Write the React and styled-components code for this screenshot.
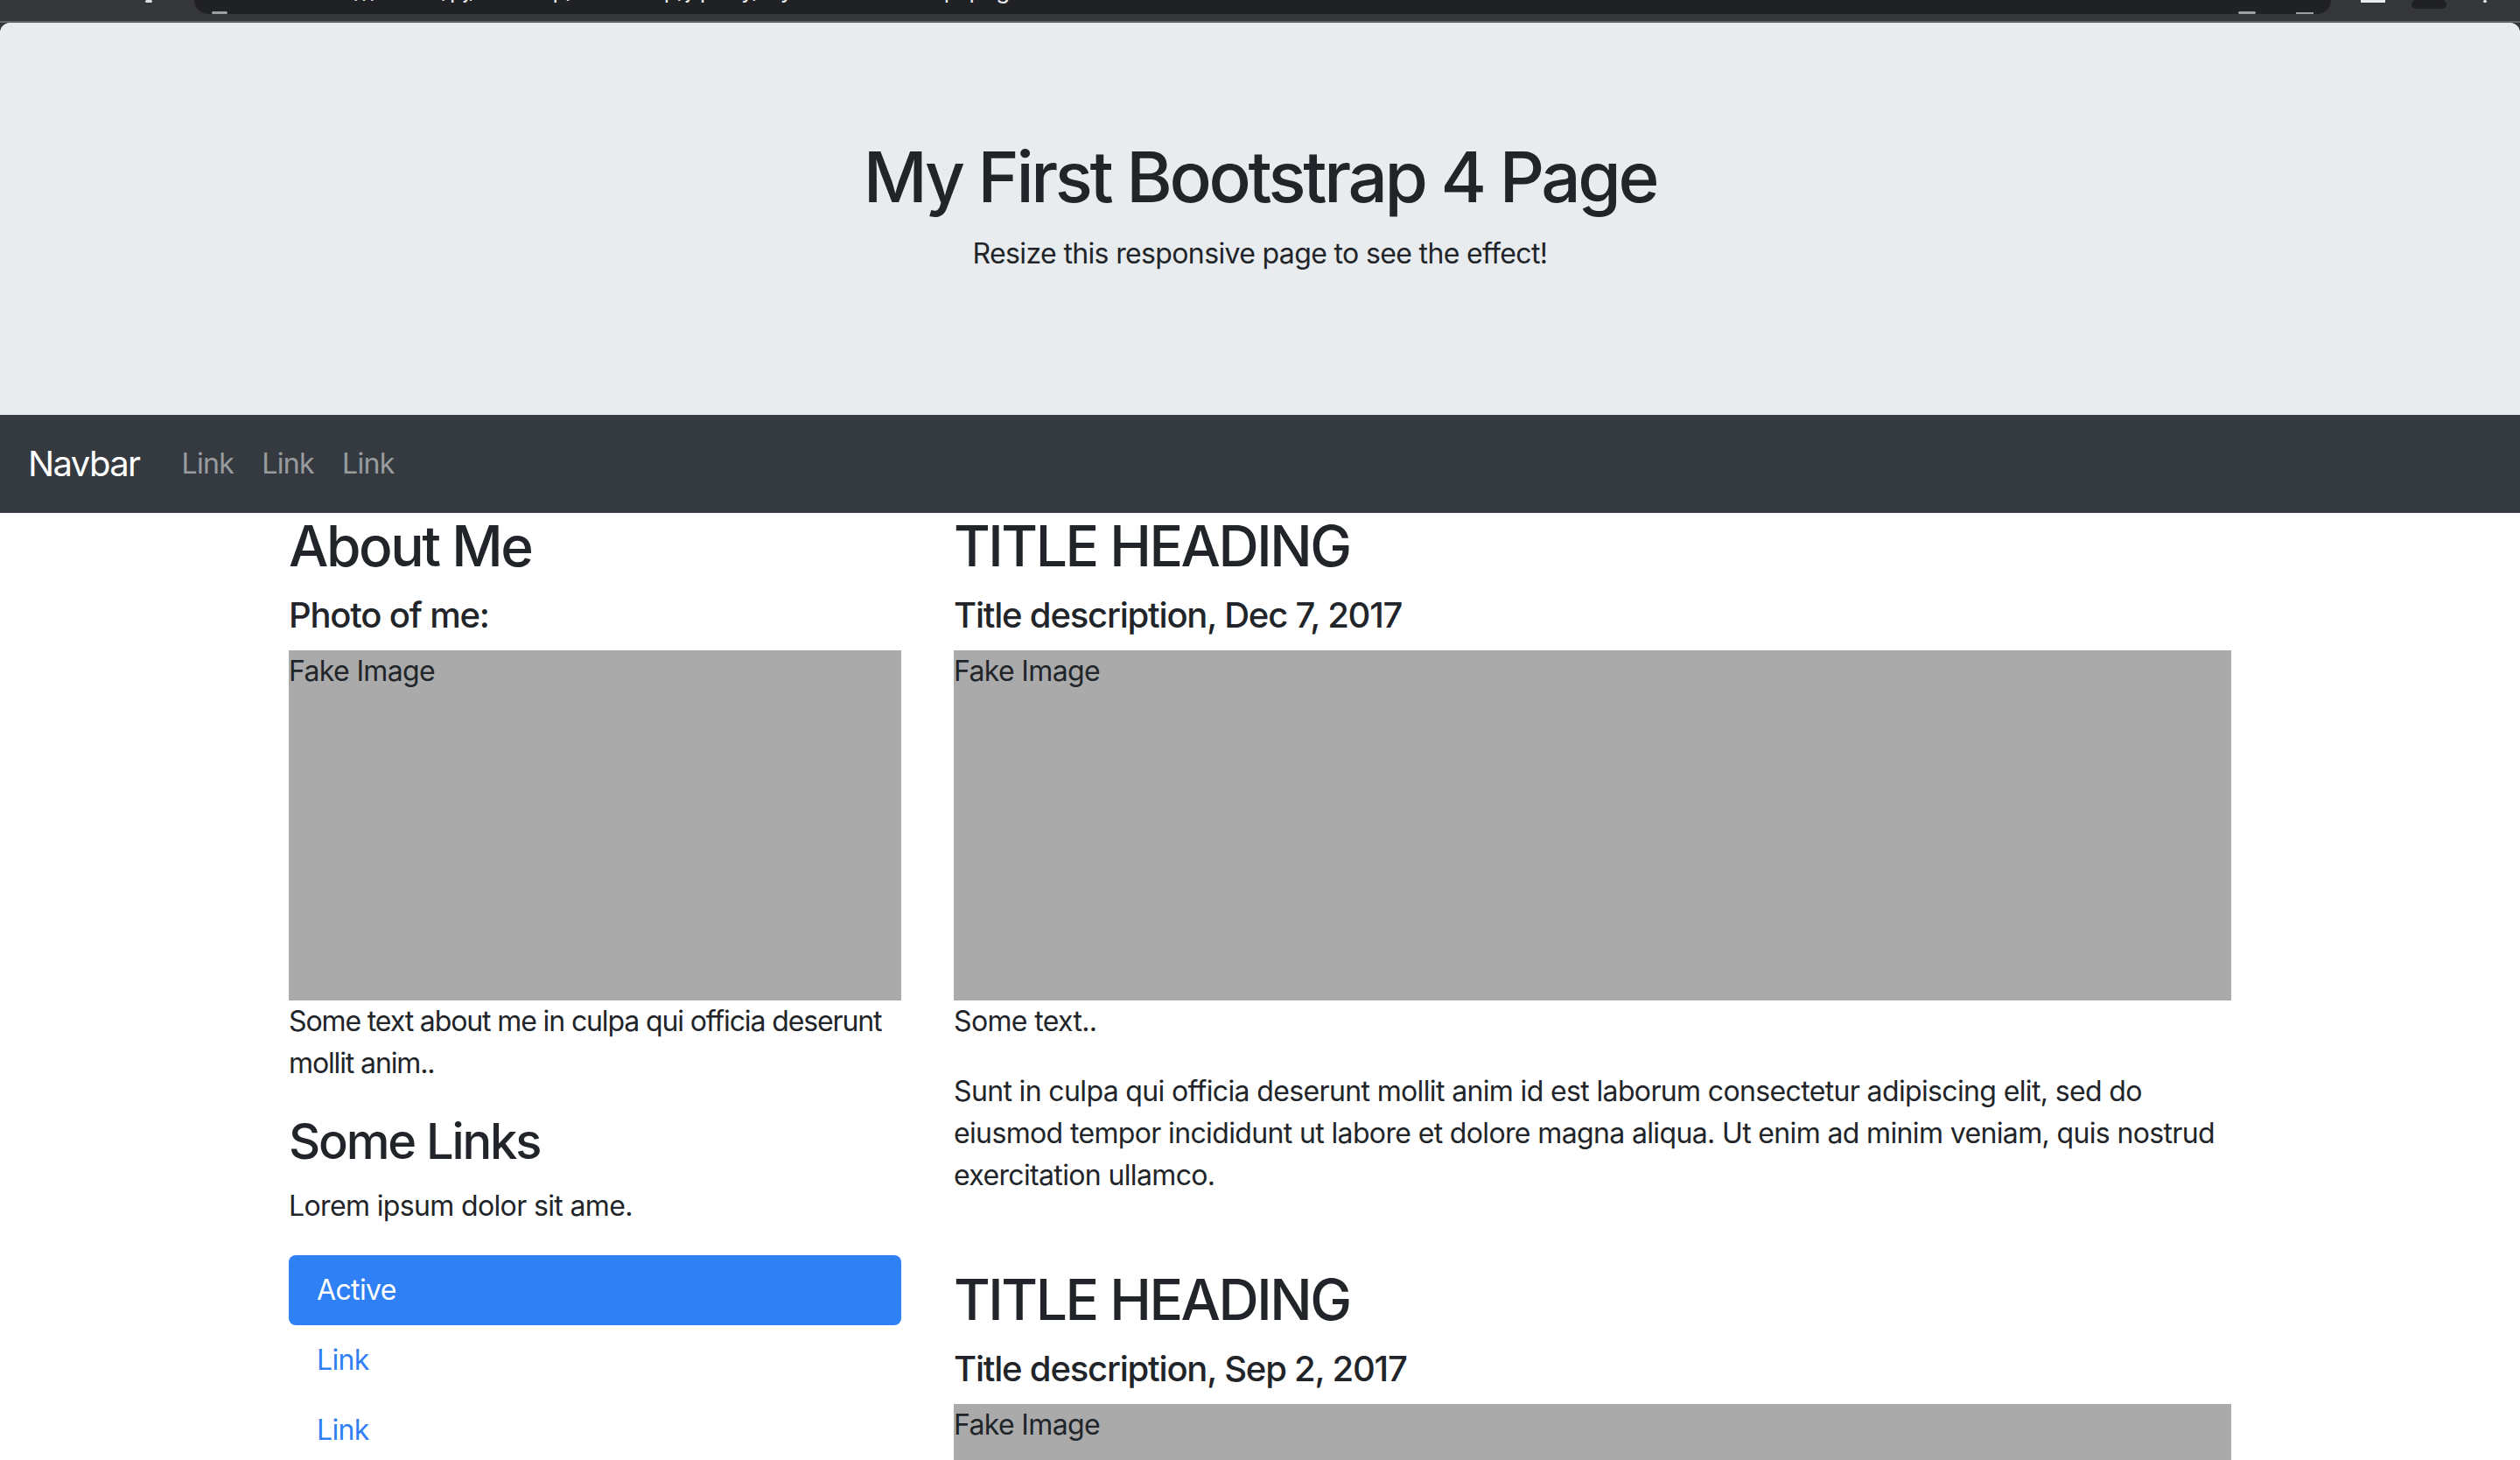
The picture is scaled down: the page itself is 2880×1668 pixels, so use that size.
import React from 'react';
import styled, { createGlobalStyle } from 'styled-components';

const GlobalStyle = createGlobalStyle`
  html, body {
    margin: 0;
    padding: 0;
    background: #35363a;
  }
  body {
    font-family: Inter, "Noto Sans", sans-serif;
    font-size: 32px;
    line-height: 1.5;
    letter-spacing: -0.02em;
    color: #212529;
  }
  * {
    box-sizing: border-box;
  }
`;

// browser chrome strip, cut off at the top of the screenshot
const Chrome = styled.div`
  height: 26px;
  display: flex;
  align-items: flex-start;
  background: #35363a;
  border-bottom: 2px solid #626366;
  overflow: hidden;
`;

const ChromeMark = styled.span`
  display: block;
  width: ${(p) => p.w}px;
  height: ${(p) => p.h}px;
  margin-left: ${(p) => p.ml}px;
  background: ${(p) => p.color || '#dadce0'};
  border-radius: ${(p) => p.r || 0}px;
  flex: none;
`;

const UrlBar = styled.div`
  width: 2442px;
  margin-left: 48px;
  height: 16px;
  background: #202124;
  border-radius: 0 0 16px 16px;
  display: flex;
  align-items: flex-end;
  overflow: hidden;
  flex: none;
`;

const UrlText = styled.span`
  margin-left: 100px;
  margin-bottom: 14px;
  font-size: 26px;
  line-height: 1;
  letter-spacing: 0;
  color: #e8eaed;
  white-space: nowrap;
`;

const UrlSpacer = styled.span`
  flex: 1;
`;

const Page = styled.div`
  background: #fff;
  border-radius: 12px 12px 0 0;
  overflow: hidden;
`;

const Jumbotron = styled.div`
  background: #e9ecef;
  padding: 128px 64px;
  text-align: center;
`;

const Title = styled.h1`
  margin: 0 0 16px;
  font-size: 80px;
  font-weight: 500;
  line-height: 1.2;
  letter-spacing: -0.042em;
`;

const Lead = styled.p`
  margin: 0 0 32px;
`;

const Navbar = styled.nav`
  background: #343a40;
  display: flex;
  align-items: center;
  padding: 16px 32px;
`;

const Brand = styled.a`
  font-size: 40px;
  line-height: 1.5;
  padding: 10px 0;
  margin-right: 32px;
  letter-spacing: -0.04em;
  color: #fff;
  text-decoration: none;
`;

const NavLink = styled.a`
  padding: 16px;
  color: rgba(255, 255, 255, 0.5);
  text-decoration: none;
`;

const Container = styled.div`
  width: 2280px;
  margin: 0 auto;
  padding: 0 30px;
`;

const Row = styled.div`
  display: flex;
  margin: 0 -30px;
`;

const Col = styled.div`
  flex: 0 0 ${(p) => p.span}%;
  max-width: ${(p) => p.span}%;
  padding: 0 30px;
`;

const H2 = styled.h2`
  margin: 0 0 16px;
  font-size: 64px;
  font-weight: 500;
  line-height: 1.2;
  letter-spacing: -0.038em;
`;

const H3 = styled.h3`
  margin: 0 0 16px;
  font-size: 56px;
  font-weight: 500;
  line-height: 1.2;
  letter-spacing: -0.038em;
`;

const H5 = styled.h5`
  margin: 0 0 16px;
  font-size: 40px;
  font-weight: 500;
  line-height: 1.2;
  letter-spacing: -0.03em;
`;

const FakeImg = styled.div`
  height: 400px;
  background: #aaa;
`;

const Text = styled.p`
  margin: 0 0 32px;
  letter-spacing: ${(p) => (p.tight ? '-0.035em' : 'inherit')};
`;

const Pills = styled.ul`
  list-style: none;
  margin: 0;
  padding: 0;
  display: flex;
  flex-direction: column;
`;

const Pill = styled.a`
  display: block;
  padding: 16px 32px;
  border-radius: 8px;
  text-decoration: none;
  color: ${(p) => (p.active ? '#fff' : p.disabled ? '#6c757d' : '#2f7ff5')};
  background: ${(p) => (p.active ? '#2f7ff5' : 'transparent')};
`;

const Spacer = styled.div`
  height: 48px;
`;

export default function App() {
  return (
    <>
      <GlobalStyle />
      <Chrome>
        <ChromeMark ml={166} w={8} h={3} r={2} />
        <UrlBar>
          <ChromeMark ml={20} w={18} h={3} r={4} color="#9aa0a6" />
          <UrlText>file:///Users/pj/Desktop/bootstrap/jquery/my_first_bootstrap_page.html</UrlText>
          <UrlSpacer />
          <ChromeMark ml={0} w={20} h={3} r={4} color="#9aa0a6" />
          <ChromeMark ml={46} w={20} h={2} color="#9aa0a6" />
          <ChromeMark ml={20} w={0} h={0} />
        </UrlBar>
        <ChromeMark ml={34} w={28} h={3} color="#e8eaed" />
        <ChromeMark ml={30} w={40} h={10} r={20} color="#202124" />
        <ChromeMark ml={42} w={4} h={3} r={2} color="#e8eaed" />
      </Chrome>
      <Page>
        <Jumbotron>
          <Title>My First Bootstrap 4 Page</Title>
          <Lead>Resize this responsive page to see the effect!</Lead>
        </Jumbotron>

        <Navbar>
          <Brand href="#">Navbar</Brand>
          <NavLink href="#">Link</NavLink>
          <NavLink href="#">Link</NavLink>
          <NavLink href="#">Link</NavLink>
        </Navbar>

        <Container>
          <Row>
            <Col span={33.3333}>
              <H2>About Me</H2>
              <H5>Photo of me:</H5>
              <FakeImg>Fake Image</FakeImg>
              <Text tight>Some text about me in culpa qui officia deserunt mollit anim..</Text>
              <H3>Some Links</H3>
              <Text>Lorem ipsum dolor sit ame.</Text>
              <Pills>
                <li><Pill href="#" active>Active</Pill></li>
                <li><Pill href="#">Link</Pill></li>
                <li><Pill href="#">Link</Pill></li>
                <li><Pill href="#" disabled>Disabled</Pill></li>
              </Pills>
            </Col>
            <Col span={66.6667}>
              <H2>TITLE HEADING</H2>
              <H5>Title description, Dec 7, 2017</H5>
              <FakeImg>Fake Image</FakeImg>
              <Text>Some text..</Text>
              <Text>
                Sunt in culpa qui officia deserunt mollit anim id est laborum consectetur adipiscing elit, sed do
                eiusmod tempor incididunt ut labore et dolore magna aliqua. Ut enim ad minim veniam, quis nostrud
                exercitation ullamco.
              </Text>
              <Spacer />
              <H2>TITLE HEADING</H2>
              <H5>Title description, Sep 2, 2017</H5>
              <FakeImg>Fake Image</FakeImg>
              <Text>Some text..</Text>
            </Col>
          </Row>
        </Container>
      </Page>
    </>
  );
}
